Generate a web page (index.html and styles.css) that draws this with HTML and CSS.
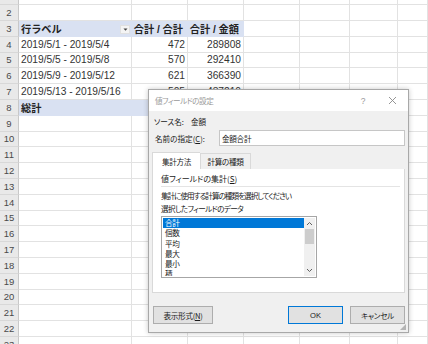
FILE: index.html
```html
<!DOCTYPE html>
<html lang="ja">
<head>
<meta charset="utf-8">
<link rel="stylesheet" href="styles.css">
</head>
<body>
<div class="sheet">
  <div class="row top"><div class="rh"></div><div class="c"></div><div class="c"></div><div class="c"></div><div class="c"></div><div class="c"></div><div class="c"></div><div class="c"></div></div>
  <div class="row"><div class="rh">2</div><div class="c"></div><div class="c"></div><div class="c"></div><div class="c"></div><div class="c"></div><div class="c"></div><div class="c"></div></div>
  <div class="row band"><div class="rh">3</div><div class="c b lbl"><span>行ラベル</span><span class="dd"><svg width="7" height="5" viewBox="0 0 7 5"><path d="M1.5 1.5h4L3.5 3.8z" fill="#444"/></svg></span></div><div class="c b r hdr">合計 / 合計</div><div class="c b r hdr">合計 / 金額</div><div class="c"></div><div class="c"></div><div class="c"></div><div class="c"></div></div>
  <div class="row"><div class="rh">4</div><div class="c">2019/5/1 - 2019/5/4</div><div class="c r">472</div><div class="c r">289808</div><div class="c"></div><div class="c"></div><div class="c"></div><div class="c"></div></div>
  <div class="row"><div class="rh">5</div><div class="c">2019/5/5 - 2019/5/8</div><div class="c r">570</div><div class="c r">292410</div><div class="c"></div><div class="c"></div><div class="c"></div><div class="c"></div></div>
  <div class="row"><div class="rh">6</div><div class="c">2019/5/9 - 2019/5/12</div><div class="c r">621</div><div class="c r">366390</div><div class="c"></div><div class="c"></div><div class="c"></div><div class="c"></div></div>
  <div class="row"><div class="rh">7</div><div class="c">2019/5/13 - 2019/5/16</div><div class="c r">505</div><div class="c r">437210</div><div class="c"></div><div class="c"></div><div class="c"></div><div class="c"></div></div>
  <div class="row band"><div class="rh">8</div><div class="c b">総計</div><div class="c b r"></div><div class="c b r"></div><div class="c"></div><div class="c"></div><div class="c"></div><div class="c"></div></div>
  <div class="row"><div class="rh">9</div><div class="c"></div><div class="c"></div><div class="c"></div><div class="c"></div><div class="c"></div><div class="c"></div><div class="c"></div></div>
  <div class="row"><div class="rh">10</div><div class="c"></div><div class="c"></div><div class="c"></div><div class="c"></div><div class="c"></div><div class="c"></div><div class="c"></div></div>
  <div class="row"><div class="rh">11</div><div class="c"></div><div class="c"></div><div class="c"></div><div class="c"></div><div class="c"></div><div class="c"></div><div class="c"></div></div>
  <div class="row"><div class="rh">12</div><div class="c"></div><div class="c"></div><div class="c"></div><div class="c"></div><div class="c"></div><div class="c"></div><div class="c"></div></div>
  <div class="row"><div class="rh">13</div><div class="c"></div><div class="c"></div><div class="c"></div><div class="c"></div><div class="c"></div><div class="c"></div><div class="c"></div></div>
  <div class="row"><div class="rh">14</div><div class="c"></div><div class="c"></div><div class="c"></div><div class="c"></div><div class="c"></div><div class="c"></div><div class="c"></div></div>
  <div class="row"><div class="rh">15</div><div class="c"></div><div class="c"></div><div class="c"></div><div class="c"></div><div class="c"></div><div class="c"></div><div class="c"></div></div>
  <div class="row"><div class="rh">16</div><div class="c"></div><div class="c"></div><div class="c"></div><div class="c"></div><div class="c"></div><div class="c"></div><div class="c"></div></div>
  <div class="row"><div class="rh">17</div><div class="c"></div><div class="c"></div><div class="c"></div><div class="c"></div><div class="c"></div><div class="c"></div><div class="c"></div></div>
  <div class="row"><div class="rh">18</div><div class="c"></div><div class="c"></div><div class="c"></div><div class="c"></div><div class="c"></div><div class="c"></div><div class="c"></div></div>
  <div class="row"><div class="rh">19</div><div class="c"></div><div class="c"></div><div class="c"></div><div class="c"></div><div class="c"></div><div class="c"></div><div class="c"></div></div>
  <div class="row"><div class="rh">20</div><div class="c"></div><div class="c"></div><div class="c"></div><div class="c"></div><div class="c"></div><div class="c"></div><div class="c"></div></div>
  <div class="row"><div class="rh">21</div><div class="c"></div><div class="c"></div><div class="c"></div><div class="c"></div><div class="c"></div><div class="c"></div><div class="c"></div></div>
  <div class="row"><div class="rh">22</div><div class="c"></div><div class="c"></div><div class="c"></div><div class="c"></div><div class="c"></div><div class="c"></div><div class="c"></div></div>
  <div class="row"><div class="rh">23</div><div class="c"></div><div class="c"></div><div class="c"></div><div class="c"></div><div class="c"></div><div class="c"></div><div class="c"></div></div>
</div>

<div class="dialog">
  <div class="titlebar">
    <span class="title">値フィールドの設定</span>
    <span class="tb-btn q">?</span>
    <span class="tb-btn x"><svg width="9" height="9" viewBox="0 0 9 9"><path d="M1 1l7 7M8 1L1 8" stroke="#8a8a8a" stroke-width="0.9"/></svg></span>
  </div>
  <div class="body">
    <div class="src"><span>ソース名:</span><span>金額</span></div>
    <div class="name"><span class="name-l">名前の指定(<u>C</u>):</span><div class="input">金額合計</div></div>
    <div class="tabs"><div class="tab active">集計方法</div><div class="tab second">計算の種類</div></div>
    <div class="panel">
      <div class="grp">値フィールドの集計(<u>S</u>)</div>
      <div class="sep"></div>
      <div class="txt long">集計に使用する計算の種類を選択してください</div>
      <div class="txt">選択したフィールドのデータ</div>
      <div class="list">
        <div class="items">
          <div class="item sel">合計</div>
          <div class="item">個数</div>
          <div class="item">平均</div>
          <div class="item">最大</div>
          <div class="item">最小</div>
          <div class="item">積</div>
        </div>
        <div class="sb">
          <div class="arrow"><svg width="7" height="5" viewBox="0 0 7 5"><path d="M1 4l2.5-2.5L6 4" fill="none" stroke="#606060" stroke-width="1"/></svg></div>
          <div class="track"><div class="thumb"></div></div>
          <div class="arrow"><svg width="7" height="5" viewBox="0 0 7 5"><path d="M1 1l2.5 2.5L6 1" fill="none" stroke="#606060" stroke-width="1"/></svg></div>
        </div>
      </div>
    </div>
    <div class="buttons">
      <div class="btn fmt">表示形式(<u>N</u>)</div>
      <div class="btn ok">OK</div>
      <div class="btn cancel">キャンセル</div>
    </div>
  </div>
  <svg class="grip" width="6" height="6" viewBox="0 0 6 6"><path d="M6 0V6H0z" fill="#b4b4b4"/></svg>
</div>
</body>
</html>
```

FILE: styles.css
```css
html, body {
  margin: 0;
  padding: 0;
  background: #ffffff;
  overflow: hidden;
}
body {
  width: 428px;
  height: 344px;
  position: relative;
  font-family: "Liberation Sans", "Noto Sans CJK JP", sans-serif;
}
.sheet {
  display: flex;
  flex-direction: column;
  width: 428px;
  overflow: hidden;
}
.row {
  display: grid;
  grid-template-columns: 19px 113px 56px 56px 56px 50px 48px 1fr;
  height: 15.8px;
  flex: none;
}
.row.top {
  height: 5.2px;
  overflow: hidden;
}
.rh {
  background: #e9e9e9;
  border-right: 1px solid #c8c8c8;
  border-bottom: 1px solid #d8d8d8;
  box-sizing: border-box;
  color: #4a4a4a;
  font-size: 9.5px;
  display: flex;
  align-items: center;
  justify-content: center;
  overflow: hidden;
}
.c {
  border-right: 1px solid #e2e2e2;
  border-bottom: 1px solid #e2e2e2;
  box-sizing: border-box;
  font-size: 10.2px;
  color: #333;
  display: flex;
  align-items: center;
  padding: 0 2px;
  white-space: nowrap;
  min-width: 0;
}
.c.r {
  justify-content: flex-end;
}
.c.hdr {
  padding-right: 4px;
}
.band .c:nth-child(2),
.band .c:nth-child(3),
.band .c:nth-child(4) {
  background: #d9e1f2;
  border-right-color: #d9e1f2;
  border-bottom-color: #d9e1f2;
}
.c.b {
  font-weight: bold;
  color: #222;
}
.lbl {
  justify-content: space-between;
  padding-right: 1px;
}
.dd {
  width: 10px;
  height: 9px;
  background: #f4f4f4;
  border: 1px solid #e0e0e0;
  box-sizing: border-box;
  display: flex;
  align-items: center;
  justify-content: center;
  margin-top: 3px;
}

/* dialog */
.dialog {
  position: absolute;
  left: 148px;
  top: 89px;
  width: 261px;
  height: 244px;
  box-sizing: border-box;
  background: #f0f0f0;
  border: 1px solid #a8a8a8;
  box-shadow: 0 0 5px rgba(0,0,0,0.22);
  font-family: "Noto Sans CJK JP", sans-serif;
  font-feature-settings: "palt";
  font-size: 7.6px;
  letter-spacing: -0.3px;
  color: #1a1a1a;
  display: flex;
  flex-direction: column;
}
.titlebar {
  height: 21px;
  background: #fff;
  display: flex;
  align-items: center;
  flex: none;
}
.title {
  color: #9a9a9a;
  padding-left: 6px;
  flex: 1;
  letter-spacing: -0.5px;
}
.tb-btn {
  display: flex;
  align-items: center;
  justify-content: center;
  color: #9a9a9a;
}
.tb-btn.q {
  width: 20px;
  font-family: "Liberation Sans", sans-serif;
  font-size: 8.5px;
  margin-right: 9px;
}
.tb-btn.x {
  width: 20px;
  margin-right: 6px;
}
.body {
  flex: 1;
  padding: 0 3px 0 3px;
  display: flex;
  flex-direction: column;
}
.src {
  display: flex;
  gap: 7px;
  padding: 3px 0 0 2px;
  height: 14px;
  align-items: center;
  letter-spacing: 0;
}
.name {
  display: flex;
  align-items: center;
  margin-top: 2px;
  height: 16px;
}
.name-l {
  padding-left: 3px;
  width: 64px;
  letter-spacing: 0;
}
.input {
  flex: 1;
  height: 16px;
  box-sizing: border-box;
  background: #fff;
  border: 1px solid #c6c6c6;
  display: flex;
  align-items: center;
  padding-left: 2px;
}
u {
  text-decoration: underline;
  text-underline-offset: 1px;
}
.tabs {
  display: flex;
  margin-top: 6px;
  height: 17px;
  align-items: flex-end;
}
.tab {
  height: 16px;
  box-sizing: border-box;
  border: 1px solid #d9d9d9;
  border-bottom: none;
  display: flex;
  align-items: center;
  justify-content: center;
  background: #f0f0f0;
}
.tab.active {
  height: 17px;
  background: #fff;
  width: 48px;
  border-right: none;
}
.tab.second {
  width: 51px;
}
.panel {
  background: #fff;
  border: 1px solid #d9d9d9;
  border-top: none;
  height: 124px;
  box-sizing: border-box;
  padding: 3px 4px 0 8px;
  display: flex;
  flex-direction: column;
}
.grp {
  height: 12px;
  display: flex;
  align-items: center;
  font-size: 8px;
  letter-spacing: 0;
}
.sep {
  height: 1px;
  background: #e4e4e4;
  margin: 2px 0 2px 0;
}
.txt {
  height: 13px;
  display: flex;
  align-items: center;
  letter-spacing: -0.6px;
}
.txt.long {
  letter-spacing: -1px;
}
.list {
  margin-top: 1px;
  width: 156px;
  height: 62px;
  box-sizing: border-box;
  border: 1px solid #a6a6a6;
  display: flex;
  padding: 1px;
}
.items {
  flex: 1;
  overflow: hidden;
}
.item {
  height: 10.3px;
  line-height: 10.3px;
  padding-left: 2px;
}
.item.sel {
  background: #0078d7;
  color: #fff;
}
.sb {
  width: 11px;
  display: flex;
  flex-direction: column;
  background: #f0f0f0;
}
.arrow {
  height: 11px;
  display: flex;
  align-items: center;
  justify-content: center;
}
.track {
  flex: 1;
}
.thumb {
  height: 15px;
  background: #cdcdcd;
  margin: 0 1px;
}
.buttons {
  display: flex;
  margin-top: 13px;
  padding-left: 1px;
  gap: 7px;
}
.btn {
  height: 18px;
  box-sizing: border-box;
  background: #e1e1e1;
  border: 1px solid #adadad;
  display: flex;
  align-items: center;
  justify-content: center;
}
.btn.fmt {
  width: 60px;
  margin-right: auto;
}
.btn.ok {
  width: 55px;
  border-color: #0078d7;
  font-family: "Liberation Sans", sans-serif;
  letter-spacing: 0;
}
.btn.cancel {
  width: 55px;
}
.grip {
  position: absolute;
  right: 2px;
  bottom: 2px;
}
```
